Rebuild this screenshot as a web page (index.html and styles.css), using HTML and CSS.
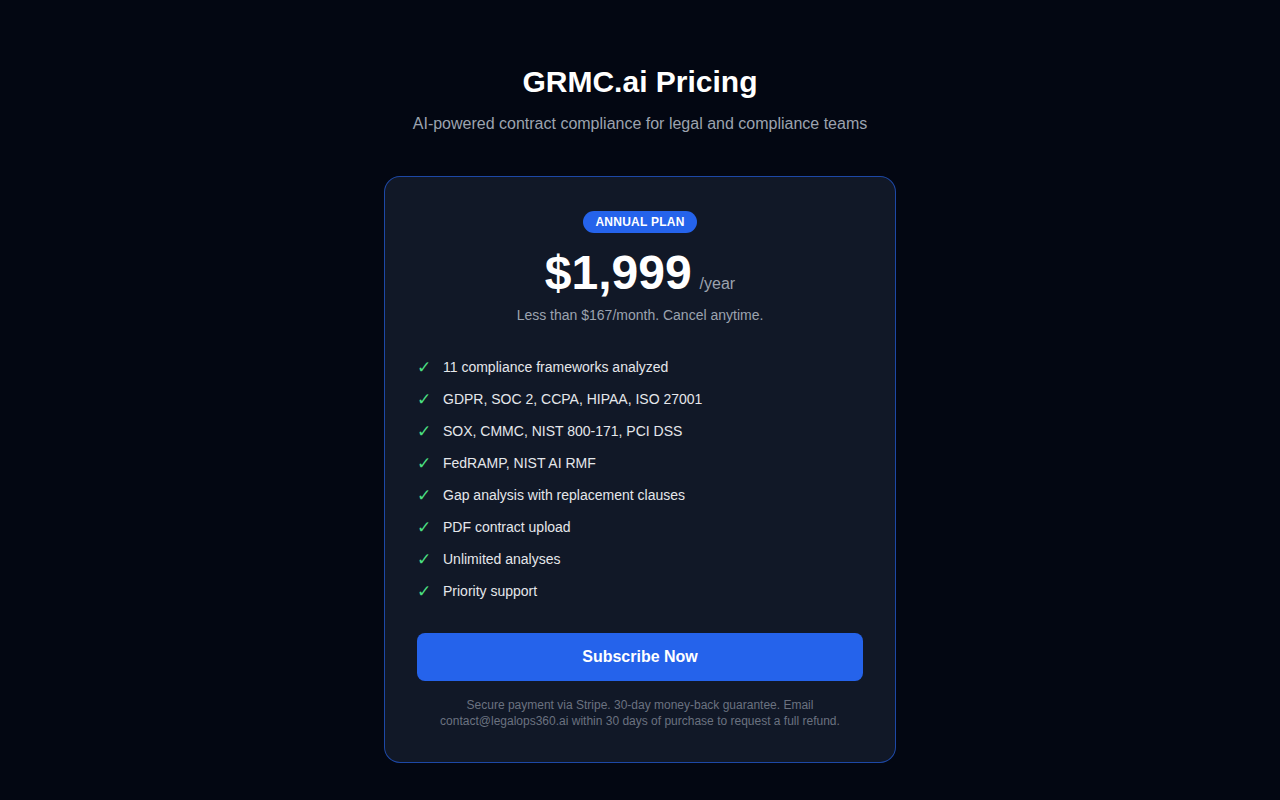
FILE: index.html
```html
<!DOCTYPE html>
<html lang="en">
<head>
<meta charset="utf-8">
<title>GRMC.ai Pricing</title>
<link rel="stylesheet" href="styles.css">
</head>
<body>
<main class="page">
  <header class="hero">
    <h1 class="title">GRMC.ai Pricing</h1>
    <p class="subtitle">AI-powered contract compliance for legal and compliance teams</p>
  </header>
  <section class="card">
    <div class="badge-row"><span class="badge">Annual Plan</span></div>
    <div class="price-row">
      <span class="price">$1,999</span>
      <span class="period">/year</span>
    </div>
    <p class="price-note">Less than $167/month. Cancel anytime.</p>
    <ul class="features">
      <li><span class="check">✓</span>11 compliance frameworks analyzed</li>
      <li><span class="check">✓</span>GDPR, SOC 2, CCPA, HIPAA, ISO 27001</li>
      <li><span class="check">✓</span>SOX, CMMC, NIST 800-171, PCI DSS</li>
      <li><span class="check">✓</span>FedRAMP, NIST AI RMF</li>
      <li><span class="check">✓</span>Gap analysis with replacement clauses</li>
      <li><span class="check">✓</span>PDF contract upload</li>
      <li><span class="check">✓</span>Unlimited analyses</li>
      <li><span class="check">✓</span>Priority support</li>
    </ul>
    <button class="subscribe" type="button">Subscribe Now</button>
    <p class="fineprint">Secure payment via Stripe. 30-day money-back guarantee. Email contact@legalops360.ai within 30 days of purchase to request a full refund.</p>
  </section>
</main>
</body>
</html>
```

FILE: styles.css
```css
* { box-sizing: border-box; }

html, body {
  margin: 0;
  padding: 0;
  background: #030712;
  color: #f9fafb;
  font-family: "Liberation Sans", Arial, sans-serif;
}

.page {
  display: flex;
  flex-direction: column;
  align-items: center;
  padding: 64px 20px 40px;
}

.hero {
  text-align: center;
}

.title {
  margin: 0;
  font-size: 30px;
  line-height: 36px;
  font-weight: 700;
  color: #ffffff;
}

.subtitle {
  margin: 14px 0 0;
  font-size: 16px;
  line-height: 20px;
  color: #9ca3af;
}

.card {
  margin-top: 42px;
  width: 512px;
  background: #111827;
  border: 1px solid rgba(37, 99, 235, 0.65);
  border-radius: 16px;
  padding: 34px 32px 33px;
  text-align: center;
}

.badge-row {
  display: flex;
  justify-content: center;
}

.badge {
  display: inline-block;
  background: #2563eb;
  color: #ffffff;
  font-size: 12px;
  line-height: 14px;
  font-weight: 700;
  letter-spacing: 0.25px;
  text-transform: uppercase;
  padding: 4px 12px;
  border-radius: 999px;
}

.price-row {
  margin-top: 12px;
  display: flex;
  justify-content: center;
  align-items: baseline;
  gap: 8px;
}

.price {
  font-size: 48px;
  line-height: 56px;
  font-weight: 700;
  color: #ffffff;
}

.period {
  font-size: 16px;
  color: #9ca3af;
}

.price-note {
  margin: 6px 0 0;
  font-size: 14px;
  line-height: 16px;
  color: #9ca3af;
}

.features {
  list-style: none;
  margin: 32px 0 0;
  padding: 0;
  display: flex;
  flex-direction: column;
  gap: 8px;
  text-align: left;
}

.features li {
  display: flex;
  align-items: center;
  gap: 12px;
  font-size: 14px;
  line-height: 24px;
  color: #e5e7eb;
}

.check {
  color: #4ade80;
  font-size: 17px;
  width: 14px;
  font-family: "DejaVu Sans", sans-serif;
}

.subscribe {
  display: block;
  width: 100%;
  margin-top: 30px;
  height: 48px;
  border: none;
  border-radius: 8px;
  background: #2563eb;
  color: #ffffff;
  font-family: "Liberation Sans", Arial, sans-serif;
  font-size: 16px;
  font-weight: 700;
  cursor: pointer;
}

.fineprint {
  margin: 16px 0 0;
  font-size: 12px;
  line-height: 16px;
  color: #6b7280;
}
```
